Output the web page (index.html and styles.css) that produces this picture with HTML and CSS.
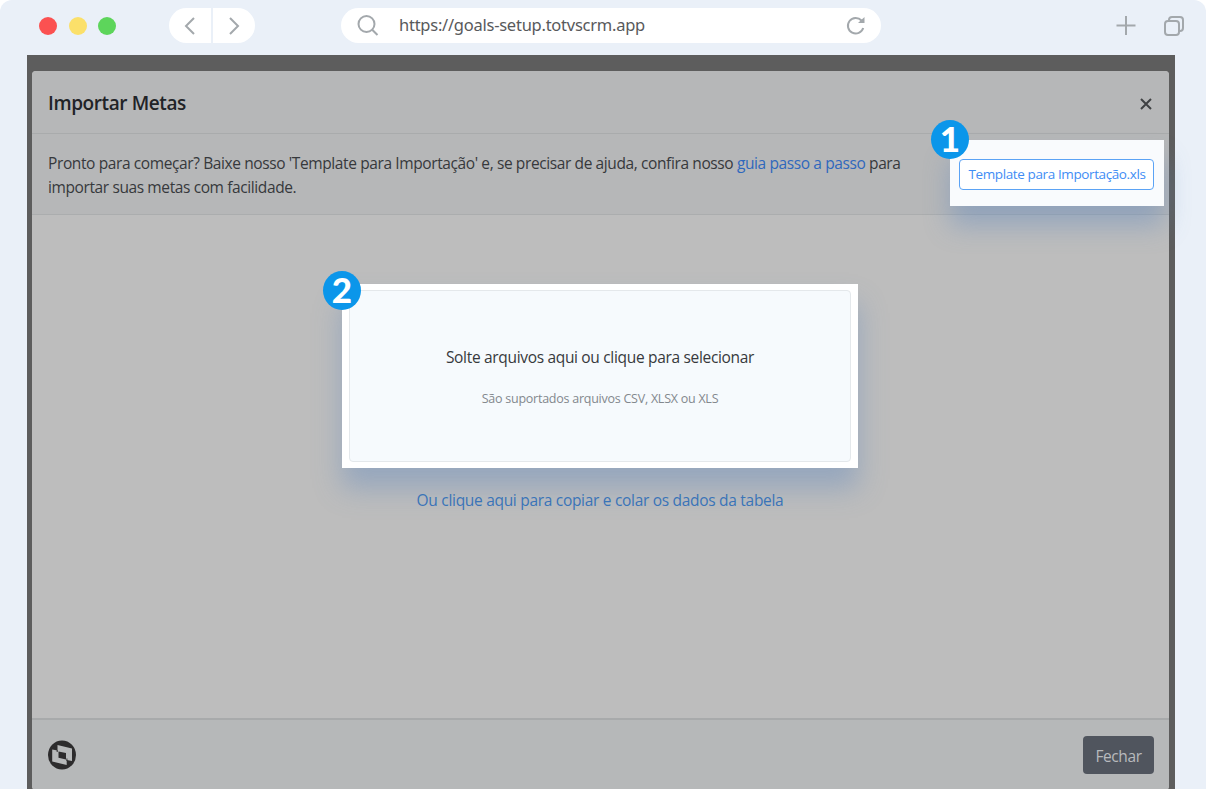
FILE: index.html
```html
<!DOCTYPE html>
<html lang="pt-BR">

<head>
  <meta charset="utf-8">
  <meta name="viewport" content="width=device-width, initial-scale=1">
  <link rel="stylesheet" href="styles.css">
  <title>Importar Metas</title>
</head>

<body>
  <div class="browser">
    <!-- Browser toolbar -->
    <div class="toolbar">
      <div class="dots">
        <span class="dot red"></span>
        <span class="dot yellow"></span>
        <span class="dot green"></span>
      </div>
      <div class="nav">
        <div class="nav_btn back">
          <svg width="12" height="20" viewBox="0 0 12 20"><path d="M10 2L2 10l8 8" /></svg>
        </div>
        <div class="nav_btn forward">
          <svg width="12" height="20" viewBox="0 0 12 20"><path d="M2 2l8 8-8 8" /></svg>
        </div>
      </div>
      <div class="address">
        <svg width="22" height="22" viewBox="0 0 22 22"><circle cx="9.5" cy="9" r="8" /><path d="M15.2 14.7L20.500 20" /></svg>
        <span class="url">https://goals-setup.totvscrm.app</span>
        <svg class="reload" width="20" height="20" viewBox="0 0 20 20"><path d="M17.200 12A7.800 7.800 0 1 1 15.500 4.500" /><path class="arrow" d="M18.500 1v6h-6.500z" /></svg>
      </div>
      <div class="tools">
        <svg width="20" height="20" viewBox="0 0 20 20"><path d="M10 0v19M.5 9.500h19" /></svg>
        <svg width="20" height="20" viewBox="0 0 20 20"><rect x="1" y="5" width="14" height="14" rx="3" /><path d="M5 5V4a3 3 0 0 1 3-3h8a3 3 0 0 1 3 3v8a3 3 0 0 1-3 3h-1" /></svg>
      </div>
    </div>

    <!-- Page with the import dialog -->
    <div class="page">
      <div class="modal">
        <div class="modal_header">
          <h1>Importar Metas</h1>
          <svg class="close" width="12" height="12" viewBox="0 0 12 12"><path d="M1 1l10 10M11 1L1 11" /></svg>
        </div>
        <div class="intro">
          <p>Pronto para começar? Baixe nosso 'Template para Importação' e, se precisar de ajuda, confira nosso <a href="#">guia passo a passo</a> para<br>importar suas metas com facilidade.</p>
          <div class="spot spot_template">
            <span class="badge">1</span>
            <button class="template_btn">Template para Importação.xls</button>
          </div>
        </div>
        <div class="modal_body">
          <div class="spot spot_drop">
            <span class="badge">2</span>
            <div class="dropzone">
              <div class="drop_title">Solte arquivos aqui ou clique para selecionar</div>
              <div class="drop_hint">São suportados arquivos CSV, XLSX ou XLS</div>
            </div>
          </div>
          <a class="paste_link" href="#">Ou clique aqui para copiar e colar os dados da tabela</a>
        </div>
        <div class="modal_footer">
          <svg width="28" height="30" viewBox="0 0 28 30">
            <ellipse cx="14" cy="15" rx="14" ry="14.500" fill="#2d2c2d" />
            <path d="M9.500 5L24 8.500v12.500l-5.300-1V25L4.200 21.500V9.500l5.300 1z" fill="#b7b9ba" />
            <path d="M10.500 11.500l7.500 1.500v6.500l-7.500-1.700z" fill="#2d2c2d" />
            <path d="M9.200 10v2M18.900 18.500v2.500" stroke="#2d2c2d" />
          </svg>
          <button class="close_btn">Fechar</button>
        </div>
      </div>
    </div>
  </div>
</body>

</html>
```
FILE: styles.css
```css
* {
  box-sizing: border-box;
}

body {
  margin: 0;
  background-color: #fff;
  font-family: "Open Sans", "Noto Sans", sans-serif;
  font-size: 15.5px;
  line-height: 24px;
  color: #36393c;
}

a {
  color: #2f68bd;
  text-decoration: none;
}

button {
  font-family: inherit;
  cursor: pointer;
}

.browser {
  height: 789px;
  overflow: hidden;
  background-color: #eaf0f8;
  border-radius: 12px 12px 0 0;
}

/* toolbar */
.toolbar {
  display: flex;
  align-items: center;
  height: 55px;
  padding: 0 22px 4px 39px;
}

.toolbar svg {
  display: block;
  flex: none;
  fill: none;
  stroke: #a3a8ac;
  stroke-width: 2;
}

.dots {
  display: flex;
  gap: 11.5px;
}

.dot {
  width: 18px;
  height: 18px;
  border-radius: 50%;
}

.red {
  background-color: #fb5151;
}

.yellow {
  background-color: #fbe06a;
}

.green {
  background-color: #5dd55b;
}

.nav {
  display: flex;
  gap: 2px;
  margin-left: 53px;
}

.nav_btn {
  display: flex;
  align-items: center;
  justify-content: center;
  width: 42px;
  height: 35px;
  background-color: #fff;
}

.back {
  border-radius: 18px 0 0 18px;
}

.forward {
  border-radius: 0 18px 18px 0;
}

.address {
  display: flex;
  align-items: center;
  width: 540px;
  height: 35px;
  margin-left: 86px;
  padding: 0 15px 0 16px;
  border-radius: 18px;
  background-color: #fff;
}

.url {
  margin-left: 20px;
  padding-bottom: 2px;
  font-family: "Noto Sans", sans-serif;
  font-size: 16.5px;
  letter-spacing: -0.25px;
  color: #58595b;
}

.address .reload {
  margin-left: auto;
}

.reload .arrow {
  fill: #a3a8ac;
  stroke: none;
}

.tools {
  display: flex;
  gap: 28px;
  margin-left: auto;
}

/* page */
.page {
  height: 734px;
  margin: 0 31px 0 27px;
  padding: 16px 6px 0 5px;
  background-color: #5d5d5d;
}

.modal {
  display: flex;
  flex-direction: column;
  height: 719px;
  border-radius: 4px;
  background-color: #bdbdbd;
}

.modal_header {
  display: flex;
  align-items: center;
  justify-content: space-between;
  height: 63px;
  padding: 2px 17px 0 16px;
  border-radius: 4px 4px 0 0;
  border-bottom: 1px solid #a9abac;
  background-color: #b6b7b8;
}

h1 {
  margin: 0;
  font-size: 19px;
  font-weight: 600;
  letter-spacing: -0.4px;
  color: #212327;
}

.close {
  margin-top: 2px;
  fill: none;
  stroke: #3f4143;
  stroke-width: 2;
}

.intro {
  display: flex;
  justify-content: space-between;
  height: 81px;
  padding: 6px 5px 0 16px;
  border-bottom: 1px solid #abadae;
  background-color: #b6b7b8;
}

.intro p {
  margin: 11px 0 0;
  letter-spacing: -0.39px;
  white-space: nowrap;
}

/* highlighted areas */
.spot {
  position: relative;
  background-color: #fff;
  box-shadow: 0 20px 26px rgba(95, 135, 190, 0.42);
}

.badge {
  position: absolute;
  top: -20px;
  left: -19px;
  width: 38px;
  height: 39px;
  border-radius: 50%;
  background-color: #0b96ea;
  color: #fff;
  font-family: Lato, sans-serif;
  font-size: 35px;
  font-weight: 900;
  line-height: 37px;
  text-align: center;
}

.spot_template {
  display: flex;
  align-items: center;
  width: 214px;
  height: 66px;
  padding: 2px 0 0 9px;
  background-color: #f9fbfd;
}

.template_btn {
  width: 195px;
  height: 31px;
  padding: 0 0 0 1px;
  border: 1px solid #5ba3f5;
  border-radius: 4px;
  background-color: #fff;
  color: #3f8df5;
  font-size: 13.5px;
  letter-spacing: -0.39px;
  white-space: nowrap;
}

.modal_body {
  display: flex;
  flex: 1;
  flex-direction: column;
  align-items: center;
  padding: 69px 1px 0 0;
}

.spot_drop {
  width: 516px;
  height: 184px;
  padding: 6px 7px;
}

.spot_drop .badge {
  top: -13px;
}

.dropzone {
  height: 172px;
  padding-top: 54px;
  border: 1px solid #e4e8eb;
  border-radius: 4px;
  background-color: #f6fafd;
  text-align: center;
}

.drop_title {
  letter-spacing: -0.32px;
}

.drop_hint {
  margin-top: 18px;
  font-size: 12.5px;
  letter-spacing: -0.25px;
  color: #83888d;
}

.paste_link {
  position: relative;
  margin-top: 20px;
  letter-spacing: -0.3px;
  color: #3a74b8;
}

.modal_footer {
  display: flex;
  align-items: center;
  justify-content: space-between;
  height: 72px;
  padding: 0 15px 0 16px;
  border-top: 2px solid #a8aaab;
  border-radius: 0 0 4px 4px;
  background-color: #b6b8b9;
}

.close_btn {
  width: 71px;
  height: 38px;
  padding: 1px 0 0;
  border: 0;
  border-radius: 4px;
  background-color: #50555e;
  color: #b8babd;
  font-size: 15.5px;
  letter-spacing: -0.4px;
}
```
